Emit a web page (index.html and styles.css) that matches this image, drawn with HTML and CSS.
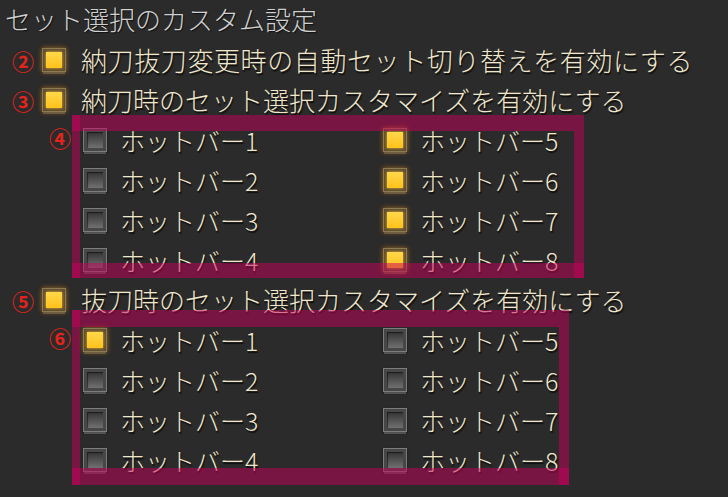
FILE: index.html
```html
<!DOCTYPE html>
<html lang="ja">
<head>
<meta charset="utf-8">
<title>セット選択のカスタム設定</title>
<link rel="stylesheet" href="styles.css">
</head>
<body>
<div class="page">
  <div class="title">セット選択のカスタム設定</div>

  <div class="opt">
    <span class="num">②</span>
    <span class="cb on"></span>
    <span class="label wide">納刀抜刀変更時の自動セット切り替えを有効にする</span>
  </div>

  <div class="opt">
    <span class="num">③</span>
    <span class="cb on"></span>
    <span class="label">納刀時のセット選択カスタマイズを有効にする</span>
  </div>

  <div class="group">
    <span class="num tag">④</span>
    <div class="item"><span class="cb"></span><span class="label">ホットバー1</span></div>
    <div class="item"><span class="cb"></span><span class="label">ホットバー2</span></div>
    <div class="item"><span class="cb"></span><span class="label">ホットバー3</span></div>
    <div class="item"><span class="cb"></span><span class="label">ホットバー4</span></div>
    <div class="item"><span class="cb on"></span><span class="label">ホットバー5</span></div>
    <div class="item"><span class="cb on"></span><span class="label">ホットバー6</span></div>
    <div class="item"><span class="cb on"></span><span class="label">ホットバー7</span></div>
    <div class="item"><span class="cb on"></span><span class="label">ホットバー8</span></div>
    <div class="frame frame-a">
      <i class="edge top"></i><i class="edge bottom"></i><i class="edge left"></i><i class="edge right"></i>
    </div>
  </div>

  <div class="opt">
    <span class="num">⑤</span>
    <span class="cb on"></span>
    <span class="label">抜刀時のセット選択カスタマイズを有効にする</span>
  </div>

  <div class="group">
    <span class="num tag">⑥</span>
    <div class="item"><span class="cb on"></span><span class="label">ホットバー1</span></div>
    <div class="item"><span class="cb"></span><span class="label">ホットバー2</span></div>
    <div class="item"><span class="cb"></span><span class="label">ホットバー3</span></div>
    <div class="item"><span class="cb"></span><span class="label">ホットバー4</span></div>
    <div class="item"><span class="cb"></span><span class="label">ホットバー5</span></div>
    <div class="item"><span class="cb"></span><span class="label">ホットバー6</span></div>
    <div class="item"><span class="cb"></span><span class="label">ホットバー7</span></div>
    <div class="item"><span class="cb"></span><span class="label">ホットバー8</span></div>
    <div class="frame frame-b">
      <i class="edge top"></i><i class="edge bottom"></i><i class="edge left"></i><i class="edge right"></i>
    </div>
  </div>
</div>
</body>
</html>
```

FILE: styles.css
```css
html, body {
  margin: 0;
  padding: 0;
}

body {
  width: 728px;
  height: 497px;
  overflow: hidden;
  background: #2b2b2b;
  font-family: "Noto Sans CJK JP", "Noto Sans", sans-serif;
  color: #efe6cb;
}

.page {
  display: flex;
  flex-direction: column;
}

.title {
  height: 38px;
  margin-bottom: 2px;
  line-height: 38px;
  padding-left: 5px;
  font-size: 26px;
  font-weight: 300;
  color: #d0d0d0;
  text-shadow: 1px 1px 1px #111;
}

.opt {
  display: flex;
  align-items: center;
  height: 40px;
}

.label {
  font-size: 26px;
  font-weight: 300;
  line-height: 40px;
  white-space: nowrap;
  text-shadow: 1px 2px 1px #0e0e0e;
}

.item .label {
  font-size: 25px;
}

.label.wide {
  letter-spacing: 0.6px;
}

.num {
  width: 30px;
  margin-left: 12px;
  font-size: 22px;
  line-height: 22px;
  font-weight: bold;
  color: #e5231b;
}

.opt .cb {
  margin-right: 15px;
}

.cb {
  position: relative;
  flex: none;
  box-sizing: border-box;
  width: 24px;
  height: 24px;
  border: 1px solid #7c7c7c;
  background: #474747;
  box-shadow: 0 3px 0 -1px rgba(125, 125, 125, 0.55), 0 1px 2px rgba(0, 0, 0, 0.6);
}

.cb::after {
  content: "";
  position: absolute;
  inset: 3px;
  background: linear-gradient(#333333, #707070);
  box-shadow: inset 1px 1px 1px rgba(0, 0, 0, 0.5);
}

.cb.on {
  border-color: #8d7a52;
  background: #5c4d33;
  box-shadow: 0 3px 0 -1px rgba(125, 110, 80, 0.6), 0 0 5px rgba(255, 160, 20, 0.55);
}

.cb.on::after {
  background: linear-gradient(#ffd84a, #ffc21c);
  box-shadow: 0 0 3px rgba(255, 190, 40, 0.9);
}

.group {
  position: relative;
  display: grid;
  grid-template-columns: 300px 300px;
  grid-template-rows: repeat(4, 40px);
  grid-auto-flow: column;
  padding-left: 83px;
}

.item {
  display: flex;
  align-items: center;
  gap: 13px;
}

.num.tag {
  position: absolute;
  left: 49px;
  top: 6px;
  margin: 0;
  width: 22px;
}

.frame {
  position: absolute;
  left: 72px;
  pointer-events: none;
  z-index: 2;
}

.edge {
  position: absolute;
  background: rgba(200, 0, 90, 0.5);
}

.edge.top { left: 0; right: 0; top: 0; }
.edge.bottom { left: 0; right: 0; bottom: 0; }
.edge.left { top: 0; bottom: 0; left: 0; width: 8px; }
.edge.right { top: 0; bottom: 0; right: 0; width: 10px; }

.frame-a {
  top: -5px;
  width: 512px;
  height: 163px;
}
.frame-a .top { height: 16px; right: 10px; }
.frame-a .bottom { height: 15px; }

.frame-b {
  top: -10px;
  width: 497px;
  height: 175px;
}
.frame-b .top { height: 17px; right: 10px; }
.frame-b .bottom { height: 17px; }
```
